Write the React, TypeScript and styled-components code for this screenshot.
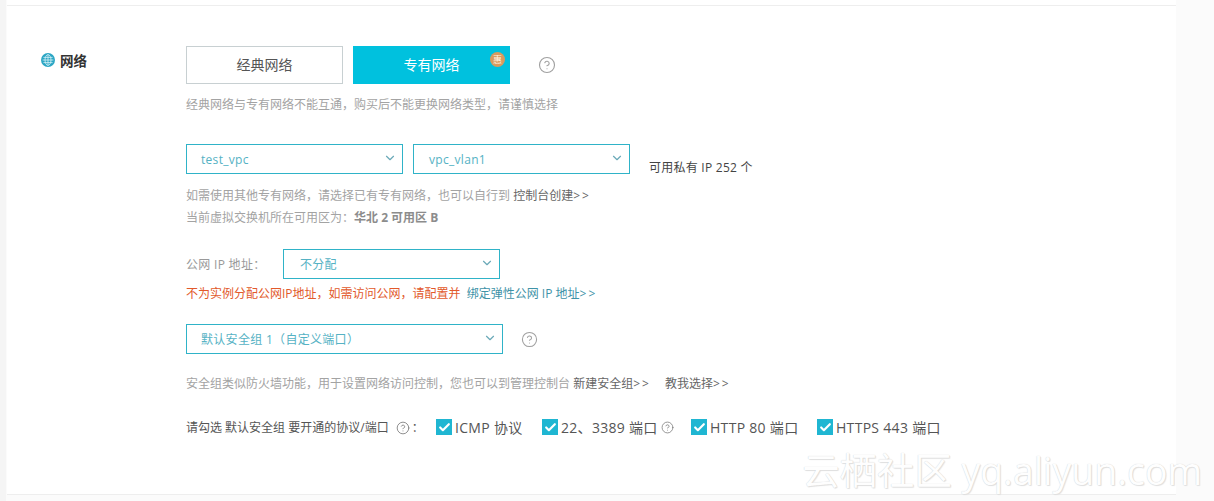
import React from 'react';
import styled, { createGlobalStyle } from 'styled-components';
import { ChevronDown, CircleHelp, Check } from 'lucide-react';

const GlobalStyle = createGlobalStyle`
	html, body {
		margin: 0;
		padding: 0;
		background: #ffffff;
	}
	body {
		font-family: 'Open Sans', 'Noto Sans CJK SC', sans-serif;
		font-size: 12px;
	}
`;

const PORTS = [
	{ label: 'ICMP 协议', width: 106 },
	{ label: '22、3389 端口', width: 149, help: true },
	{ label: 'HTTP 80 端口', width: 126 },
	{ label: 'HTTPS 443 端口', width: 130 },
];

const GlobeIcon = () => (
	<svg width="14" height="14" viewBox="0 0 14 14">
		<circle cx="7" cy="7" r="7" fill="#2ba6c4" />
		<ellipse cx="7" cy="7" rx="3" ry="5.4" fill="none" stroke="#d5f0f6" strokeWidth="0.8" />
		<path d="M1.6 7h10.8M2.4 4.4h9.2M2.4 9.6h9.2M7 1.6v10.8" stroke="#d5f0f6" strokeWidth="0.8" />
	</svg>
);

const App: React.FC = () => {
	return (
		<>
			<GlobalStyle />
			<Page>
				<Panel>
					<Section>
						<SectionLabel>
							<GlobeIcon />
							<span>网络</span>
						</SectionLabel>
						<Content>
							<ToggleRow>
								<ToggleButton>经典网络</ToggleButton>
								<ToggleButton active>
									专有网络
									<Badge>惠</Badge>
								</ToggleButton>
								<HelpIcon size={18} $left={18} />
							</ToggleRow>
							<Hint $top={12}>经典网络与专有网络不能互通，购买后不能更换网络类型，请谨慎选择</Hint>

							<SelectRow $top={30}>
								<Select $width={217} $inset={14}>
									test_vpc
									<Chevron size={14} />
								</Select>
								<Select $width={217} $inset={15}>
									vpc_vlan1
									<Chevron size={14} />
								</Select>
								<AvailableIp>可用私有 IP 252 个</AvailableIp>
							</SelectRow>
							<Hint $top={13}>
								如需使用其他专有网络，请选择已有专有网络，也可以自行到 <DarkLink>控制台创建<Arrows>&gt;&gt;</Arrows></DarkLink>
							</Hint>
							<Hint $top={4}>
								当前虚拟交换机所在可用区为：<strong>华北 2 可用区 B</strong>
							</Hint>

							<SelectRow $top={22}>
								<FieldLabel>公网 IP 地址：</FieldLabel>
								<Select $width={217} $inset={16}>
									不分配
									<Chevron size={14} />
								</Select>
							</SelectRow>
							<Hint $top={6} $tone="warning">
								不为实例分配公网IP地址，如需访问公网，请配置并 <BlueLink>绑定弹性公网 IP 地址<Arrows>&gt;&gt;</Arrows></BlueLink>
							</Hint>

							<SelectRow $top={21}>
								<Select $width={317} $inset={14}>
									默认安全组 1（自定义端口）
									<Chevron size={14} />
								</Select>
								<HelpIcon size={17} $left={8} />
							</SelectRow>
							<Hint $top={21}>
								安全组类似防火墙功能，用于设置网络访问控制，您也可以到管理控制台 <DarkLink>新建安全组<Arrows>&gt;&gt;</Arrows></DarkLink>
								<DarkLink $left={14}>教我选择<Arrows>&gt;&gt;</Arrows></DarkLink>
							</Hint>

							<PortRow>
								<PortLabel>
									请勾选 默认安全组 要开通的协议/端口
									<SmallHelp size={14} $left={7} />：
								</PortLabel>
								{PORTS.map((port) => (
									<Port key={port.label} style={{ width: port.width }}>
										<CheckBox>
											<Check size={13} strokeWidth={4} color="#ffffff" />
										</CheckBox>
										{port.label}
										{port.help && <SmallHelp size={13} $left={0} />}
									</Port>
								))}
							</PortRow>
						</Content>
					</Section>
					<Watermark>云栖社区 yq.aliyun.com</Watermark>
				</Panel>
			</Page>
		</>
	);
};

export default App;

const Page = styled.div`
	display: flex;
	height: 501px;
	overflow: hidden;
	background: #fbfbfb;
	padding-left: 7px;
	padding-right: 38px;
	box-sizing: border-box;
	box-shadow: inset 6px 0 0 #f5f5f5;
`;

const Panel = styled.div`
	position: relative;
	flex: 1;
	height: 495px;
	background: #ffffff;
	box-sizing: border-box;
	padding-top: 5px;
	border-bottom: 1px solid #eeeeee;

	&::before {
		content: '';
		display: block;
		height: 1px;
		background: #eeeeee;
	}
`;

const Section = styled.div`
	display: flex;
	padding: 40px 0 0 34px;
`;

const SectionLabel = styled.div`
	display: flex;
	align-items: center;
	gap: 5px;
	width: 145px;
	height: 28px;
	font-size: 13.5px;
	font-weight: 700;
	color: #333333;
`;

const Content = styled.div`
	display: flex;
	flex-direction: column;
`;

const ToggleRow = styled.div`
	display: flex;
	align-items: center;
	gap: 10px;
`;

const ToggleButton = styled.div<{ active?: boolean }>`
	position: relative;
	width: 157px;
	height: 38px;
	box-sizing: border-box;
	display: flex;
	align-items: center;
	justify-content: center;
	padding-bottom: 2px;
	font-size: 14px;
	color: ${(props) => (props.active ? '#ffffff' : '#555555')};
	background: ${(props) => (props.active ? '#00c1de' : '#ffffff')};
	border: 1px solid ${(props) => (props.active ? '#00c1de' : '#c8d0d2')};
`;

const Badge = styled.span`
	position: absolute;
	top: 5px;
	right: 4px;
	width: 15px;
	height: 15px;
	border-radius: 50%;
	background: #d99a5e;
	color: #fff3e0;
	font-size: 9px;
	line-height: 15px;
	text-align: center;
`;

const HelpIcon = styled(CircleHelp)<{ $left: number }>`
	margin-left: ${(props) => props.$left}px;
	color: #a0a0a0;
	stroke-width: 1.5;
`;

const SmallHelp = styled(CircleHelp)<{ $left: number }>`
	margin: 0 2px 0 ${(props) => props.$left}px;
	color: #777777;
	stroke-width: 1.4;
	vertical-align: -3px;
`;

const Hint = styled.div<{ $top: number; $tone?: 'warning' }>`
	margin-top: ${(props) => props.$top}px;
	height: 18px;
	line-height: 18px;
	font-size: 12px;
	white-space: nowrap;
	color: ${(props) => (props.$tone === 'warning' ? '#e2592b' : '#a3a3a3')};

	strong {
		color: #8c8c8c;
		font-weight: 700;
	}
`;

const DarkLink = styled.span<{ $left?: number }>`
	margin-left: ${(props) => props.$left ?? 0}px;
	color: #666666;
`;

const BlueLink = styled.span`
	margin-left: 3px;
	color: #3f93a8;
`;

const Arrows = styled.span`
	letter-spacing: 2px;
`;

const SelectRow = styled.div<{ $top: number }>`
	display: flex;
	align-items: center;
	gap: 10px;
	margin-top: ${(props) => props.$top}px;
`;

const Select = styled.div<{ $width: number; $inset: number }>`
	position: relative;
	width: ${(props) => props.$width}px;
	height: 30px;
	box-sizing: border-box;
	display: flex;
	align-items: center;
	padding-left: ${(props) => props.$inset}px;
	font-size: 12px;
	letter-spacing: 0.3px;
	color: #55b2c4;
	border: 1px solid #2fb3c8;
	background: #ffffff;
`;

const Chevron = styled(ChevronDown)`
	position: absolute;
	right: 5px;
	top: 6px;
	color: #6aa9b8;
`;

const AvailableIp = styled.div`
	margin: 8px 0 -8px 9px;
	font-size: 12px;
	letter-spacing: 0.25px;
	color: #444444;
`;

const FieldLabel = styled.div`
	width: 87px;
	font-size: 12px;
	letter-spacing: 0.3px;
	color: #999999;
	flex-shrink: 0;
`;

const PortRow = styled.div`
	display: flex;
	align-items: center;
	margin-top: 24px;
	white-space: nowrap;
`;

const PortLabel = styled.div`
	width: 250px;
	font-size: 12px;
	color: #555555;
`;

const Port = styled.div`
	display: flex;
	align-items: center;
	gap: 3px;
	font-size: 14px;
	letter-spacing: 0.3px;
	color: #555555;
`;

const CheckBox = styled.span`
	width: 16px;
	height: 16px;
	flex-shrink: 0;
	display: flex;
	align-items: center;
	justify-content: center;
	background: #1fb6d2;
`;

const Watermark = styled.div`
	position: absolute;
	right: -26px;
	bottom: -2px;
	font-size: 37.4px;
	white-space: nowrap;
	color: #fefefe;
	text-shadow: 0 0 1px #c8c8c8, 1px 1px 1px #e2e2e2;
`;
